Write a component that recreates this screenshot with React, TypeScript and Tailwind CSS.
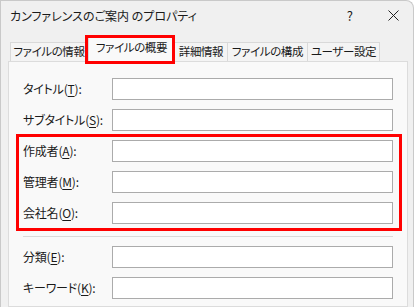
import React from "react";

const font = "font-['Noto_Sans_CJK_JP','Noto_Sans',sans-serif] [font-feature-settings:'palt']";

const tabs = [
  { label: "ファイルの情報", w: "w-[78px]" },
  { label: "ファイルの概要", w: "w-[87px]", active: true },
  { label: "詳細情報", w: "w-[54px]" },
  { label: "ファイルの構成", w: "w-[81px]" },
  { label: "ユーザー設定", w: "w-[73px]" },
];

const Label = ({ text, k }: { text: string; k: string }) => (
  <span className="w-[89px] shrink-0 whitespace-nowrap text-[12px] leading-[16px] tracking-[-0.2px] text-[#1a1a1a]">
    {text}(<span className="underline underline-offset-2">{k}</span>):
  </span>
);

const Field = ({ text, k }: { text: string; k: string }) => (
  <div className="flex items-center h-[22px]">
    <Label text={text} k={k} />
    <div className="w-[281px] h-[22px] bg-white border border-[#ababab]" />
  </div>
);

export default function App() {
  return (
    <div className={`relative w-[418px] h-[307px] bg-white overflow-hidden ${font}`}>
      <div className="flex flex-col w-[414px] h-[307px] bg-[#f0f0f0] border-l border-t border-r border-[#c9c9c9] rounded-tr-[8px]">
        {/* title bar */}
        <div className="flex items-start h-[35px] pt-[7px] pl-[9px]">
          <span className="text-[12px] leading-[16px] text-[#1a1a1a]">カンファレンスのご案内 のプロパティ</span>
          <span className="ml-auto mr-[35px] text-[13px] leading-[16px] text-[#1a1a1a]">?</span>
          <svg width="11" height="11" viewBox="0 0 11 11" className="mt-[2px] mr-[14px]">
            <path d="M0.5 0.5 L10.5 10.5 M10.5 0.5 L0.5 10.5" stroke="#222" strokeWidth="1" />
          </svg>
        </div>

        {/* tabs */}
        <div className="flex items-end h-[25px] pl-[9px]">
          {tabs.map((t) =>
            t.active ? (
              <div
                key={t.label}
                className={`${t.w} h-[26px] -mb-[1px] relative z-10 flex items-center justify-center whitespace-nowrap bg-[#f9f9f9] border border-b-0 border-[#d9d9d9] text-[11.5px] tracking-[-0.4px] text-[#1a1a1a] pb-[3px]`}
              >
                {t.label}
              </div>
            ) : (
              <div
                key={t.label}
                className={`${t.w} h-[19px] flex items-center justify-center whitespace-nowrap bg-[#f4f4f4] border border-b-0 border-[#d9d9d9] -ml-[1px] first:ml-0 text-[11.5px] tracking-[-0.4px] text-[#1a1a1a]`}
              >
                {t.label}
              </div>
            )
          )}
        </div>

        {/* panel */}
        <div className="ml-[7px] w-[400px] h-[246px] bg-[#f9f9f9] border border-[#dcdcdc] pt-[16px] pl-[14px]">
          <div className="flex flex-col gap-[9px]">
            <Field text="タイトル" k="T" />
            <Field text="サブタイトル" k="S" />
            <Field text="作成者" k="A" />
            <Field text="管理者" k="M" />
            <Field text="会社名" k="O" />
          </div>
          <div className="mt-[12px] w-[370px] h-px bg-[#d9d9d9]" />
          <div className="mt-[9px] flex flex-col gap-[9px]">
            <Field text="分類" k="E" />
            <Field text="キーワード" k="K" />
          </div>
        </div>
      </div>

      {/* highlight overlays */}
      <div className="absolute left-[85px] top-[35px] w-[90px] h-[29px] border-[3px] border-[#ff0000] z-20" />
      <div className="absolute left-[16px] top-[134px] w-[386px] h-[97px] border-[3px] border-[#ff0000] z-20" />
    </div>
  );
}
